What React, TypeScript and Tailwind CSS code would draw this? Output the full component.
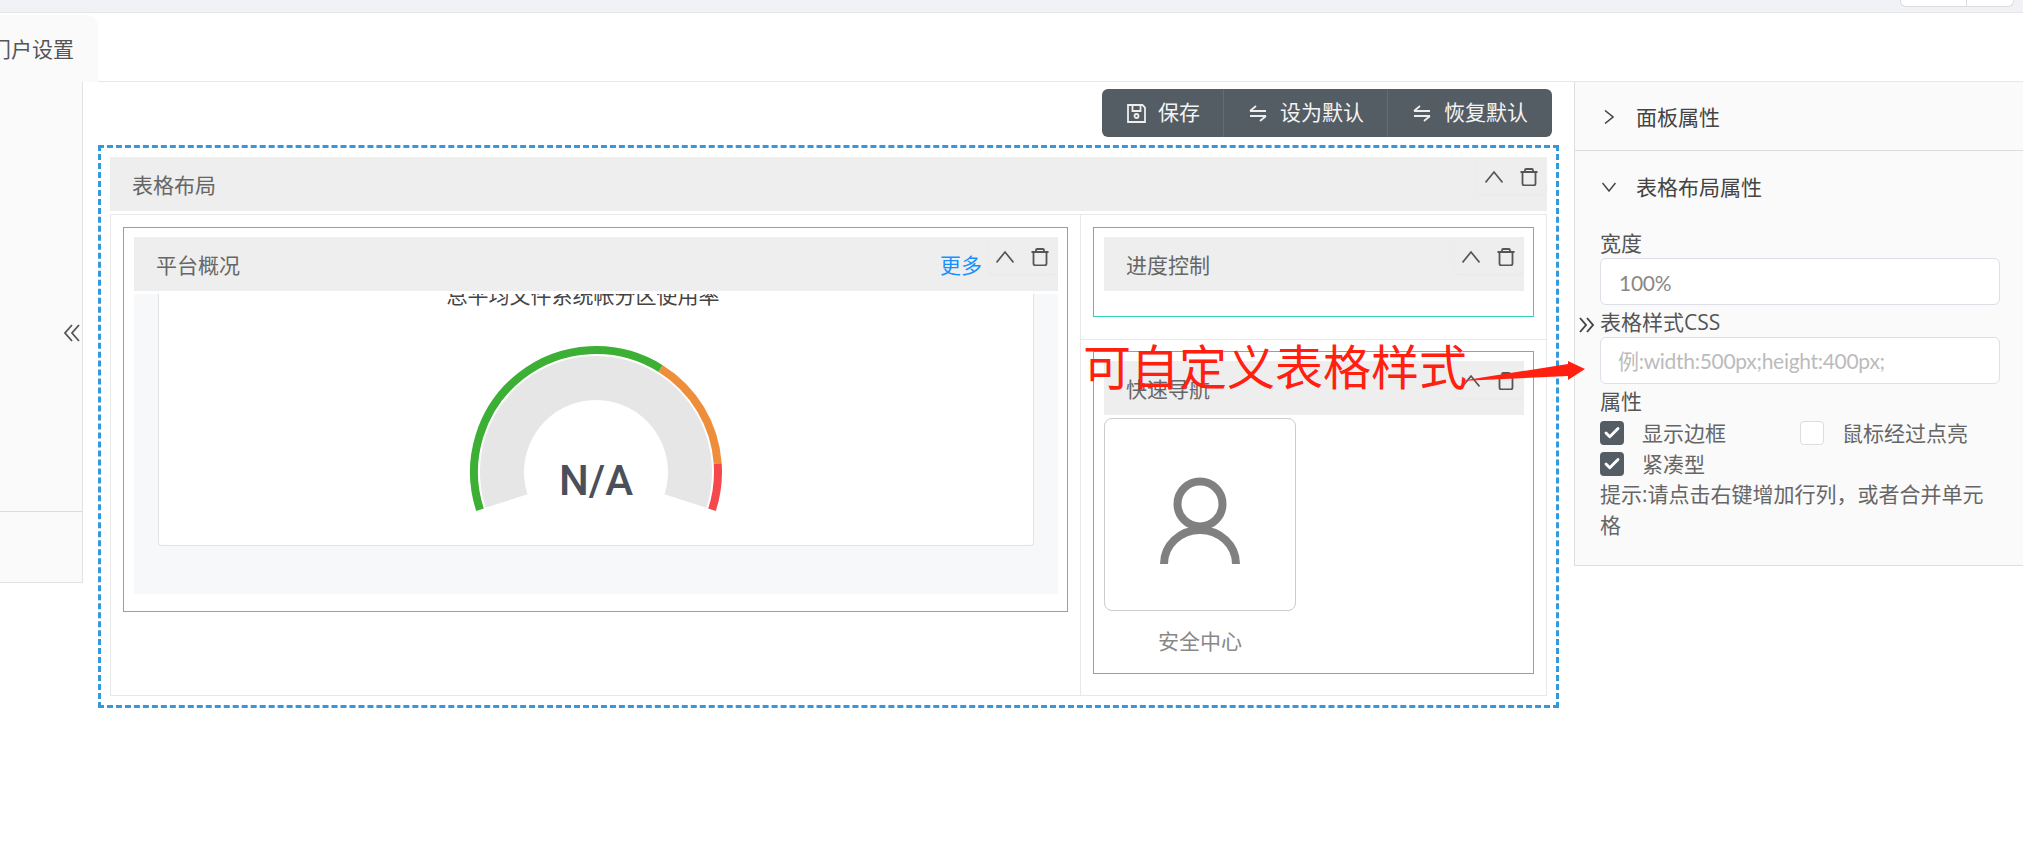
import { Check } from "lucide-react";

function pt(r: number, deg: number) {
  const a = (deg * Math.PI) / 180;
  return `${(130 + r * Math.cos(a)).toFixed(2)} ${(132 - r * Math.sin(a)).toFixed(2)}`;
}

function arc(r: number, from: number, to: number) {
  return `M${pt(r, from)} A${r} ${r} 0 0 1 ${pt(r, to)}`;
}

const Chevron = () => (
  <svg width="18" height="18" viewBox="0 0 18 18" fill="none" stroke="#555" strokeWidth="1.7">
    <path d="M0.5 14.5 9 4l8.5 10.5" />
  </svg>
);

const Trash = () => (
  <svg width="18" height="18" viewBox="0 0 18 18" fill="none" stroke="#555" strokeWidth="1.8">
    <path d="M0.5 4h17M5 4V2.200Q5 1 6.200 1h5.600Q13 1 13 2.200V4M2.500 4v11.500q0 2 2 2h9q2 0 2-2V4" />
  </svg>
);

const Swap = () => (
  <svg width="18" height="18" viewBox="0 0 18 18" fill="none" stroke="#eeeeee" strokeWidth="1.8">
    <path d="M1 7h16M1 7l6-5M1 12h16M17 12l-6 5" />
  </svg>
);

const Head = ({ title, more }: { title: string; more?: boolean }) => (
  <div className="flex h-[54px] items-start bg-[#eeeeee] pl-[22px] text-[21px] text-[#666666]">
    <span className="pt-[13px] leading-[30px]">{title}</span>
    {more && <span className="ml-auto pt-[13px] leading-[30px] text-[#1890ff]">更多</span>}
    <div className={(more ? "ml-[6px]" : "ml-auto") + " flex h-[37px] w-[70px] items-start gap-[17px] rounded-b-md pl-[8px] pt-[11px] shadow-[0_1px_2px_rgba(0,0,0,0.03)]"}>
      <Chevron />
      <Trash />
    </div>
  </div>
);

const Box = ({ children, className }: { children: React.ReactNode; className: string }) => (
  <div className={"border border-[#2ed1b2] pl-[10px] pr-[9px] pt-[9px] " + className}>{children}</div>
);

const CheckRow = ({ label, on }: { label: string; on: boolean }) => (
  <div className="flex h-[31px] w-[200px] items-center gap-[18px]">
    <span className={on ? "flex size-[24px] items-center justify-center rounded-[4px] bg-[#545c64]" : "size-[24px] rounded-[4px] border border-[#dddddd] bg-white"}>
      {on && <Check size={18} color="white" strokeWidth={3.8} />}
    </span>
    <span className="whitespace-nowrap text-[#666666]">{label}</span>
  </div>
);

export default function App() {
  return (
    <div className="relative flex h-[856px] w-[2023px] flex-col overflow-hidden bg-white font-['Open_Sans','Noto_Sans_CJK_SC',sans-serif]">
      <div className="flex h-[13px] justify-end border-b border-[#e6e6e6] bg-[#f0f2f5] pr-[9px]">
        <div className="flex h-[7px] w-[114px] rounded-b-md border border-t-0 border-[#dcdcdc] bg-white">
          <div className="w-[66px] border-r border-[#dcdcdc]" />
        </div>
      </div>

      <div className="flex h-[69px] items-end border-b border-[#e8e8e8]">
        <div className="-mb-px flex h-[67px] w-[98px] items-center justify-end overflow-hidden whitespace-nowrap rounded-tr-xl bg-[#fafafa] pr-[24px] pt-[2px] text-[21px] leading-none text-[#555555]">
          <span className="shrink-0">门户设置</span>
        </div>
      </div>

      <div className="flex flex-1 items-start">
        <div className="h-[501px] w-[83px] border-b border-r border-[#e2e2e2] bg-[#fafafa]">
          <div className="flex h-[430px] items-start justify-end border-b border-[#dddddd] pr-[2px] pt-[242px]">
            <svg width="16" height="18" viewBox="0 0 16 18" fill="none" stroke="#555" strokeWidth="1.8">
              <path d="M8 1 1 9l7 8M15 1 8 9l7 8" />
            </svg>
          </div>
        </div>

        <div className="w-[1491px]">
          <div className="flex justify-end pr-[22px] pt-[7px]">
            <div className="flex h-[48px] items-center rounded-md bg-[#545c64] text-[21px] text-[#f4f4f4]">
              <div className="flex h-full w-[122px] items-center gap-[12px] border-r border-[#636b73] pl-[25px]">
                <svg width="19" height="19" viewBox="0 0 19 19" fill="none" stroke="#eeeeee" strokeWidth="1.8">
                  <path d="M1 1h14.500L18 3.500V18H1zM5.500 1v6h8V1" />
                  <circle cx="9.500" cy="12" r="2" />
                </svg>
                <span>保存</span>
              </div>
              <div className="flex h-full w-[164px] items-center gap-[13px] border-r border-[#636b73] pl-[25px]">
                <Swap />
                <span>设为默认</span>
              </div>
              <div className="flex h-full w-[164px] items-center gap-[13px] pl-[25px]">
                <Swap />
                <span>恢复默认</span>
              </div>
            </div>
          </div>

          <div className="ml-[15px] mt-[8px] h-[563px] w-[1461px] border-[3px] border-dashed border-[#3498db] p-[9px]">
            <Head title="表格布局" />
            <div className="mt-[3px] flex h-[482px] border border-[#e8e8e8]">
              <div className="w-[969px] pl-[12px] pt-[12px]">
                <Box className="h-[385px] w-[945px]">
                  <Head title="平台概况" more />
                  <div className="mt-[3px] h-[300px] overflow-hidden bg-[#f7f8fa] pl-[24px]">
                    <div className="h-[252px] w-[876px] overflow-hidden rounded-b-sm border border-t-0 border-[#e0e2e5] bg-white">
                      <div className="-mt-[14px] pr-[26px] text-center text-[21px] leading-[30px] text-[#444444]">总平均文件系统帐分区使用率</div>
                      <div className="relative mx-auto mt-[30px] h-[180px] w-[260px]">
                        <svg width="260" height="180" viewBox="0 0 260 180" fill="none">
                          <path
                            d={`M${pt(116, 198)} A116 116 0 1 1 ${pt(116, -18)} L${pt(72, -18)} A72 72 0 1 0 ${pt(72, 198)} Z`}
                            fill="#e6e6e6"
                          />
                          <path d={arc(122, 198, 58)} stroke="#3cb034" strokeWidth="8" />
                          <path d={arc(122, 58, 4)} stroke="#ee8e3a" strokeWidth="8" />
                          <path d={arc(122, 4, -18)} stroke="#f5474c" strokeWidth="8" />
                        </svg>
                        <div className="absolute inset-x-0 top-[116px] text-center font-['Roboto',sans-serif] text-[42px] font-medium leading-[50px] text-[#4a505a]">N/A</div>
                      </div>
                    </div>
                  </div>
                </Box>
              </div>

              <div className="flex-1 border-l border-[#e8e8e8]">
                <div className="h-[125px] border-b border-[#e8e8e8] pl-[12px] pt-[12px]">
                  <Box className="h-[90px] w-[441px]">
                    <Head title="进度控制" />
                  </Box>
                </div>
                <div className="pl-[12px] pt-[11px]">
                  <Box className="h-[323px] w-[441px]">
                    <Head title="快速导航" />
                    <div className="mt-[3px] flex h-[193px] w-[192px] items-center justify-center rounded-lg border-[1.5px] border-[#cccccc]">
                      <svg width="84" height="100" viewBox="0 0 84 100" fill="none" stroke="#808080" strokeWidth="8">
                        <circle cx="42" cy="39" r="22.500" />
                        <path d="M6 99A36 34 0 0 1 78 99" />
                      </svg>
                    </div>
                    <div className="mt-[15px] w-[192px] text-center text-[21px] leading-[30px] text-[#888888]">安全中心</div>
                  </Box>
                </div>
              </div>
            </div>
          </div>
        </div>

        <div className="relative h-[484px] flex-1 border-b border-l border-[#dedede] bg-[#fafafa] text-[21px] leading-[30px]">
          <div className="flex h-[69px] items-center gap-[22px] border-b border-[#dddddd] pl-[29px] pt-[2px] text-[#444444]">
            <svg width="10" height="14" viewBox="0 0 10 14" fill="none" stroke="#444" strokeWidth="1.500">
              <path d="M1 0.500 9 7l-8 6.500" />
            </svg>
            <span>面板属性</span>
          </div>
          <div className="flex h-[77px] items-center gap-[20px] pb-[6px] pl-[27px] text-[#444444]">
            <svg width="14" height="10" viewBox="0 0 14 10" fill="none" stroke="#444" strokeWidth="1.500">
              <path d="M0.500 1 7 9l6.500-8" />
            </svg>
            <span>表格布局属性</span>
          </div>
          <div className="pl-[25px] text-[#555555]">
            <div>宽度</div>
            <div className="flex h-[47px] w-[400px] items-center rounded-md border border-[#dcdfe6] bg-white pl-[18px] pt-[2px] font-['Lato','Noto_Sans_CJK_SC',sans-serif] tracking-[-0.3px] text-[#888888]">100%</div>
            <div className="mt-[2px]">表格样式CSS</div>
            <div className="flex h-[47px] w-[400px] items-center rounded-md border border-[#dcdfe6] bg-white pl-[17px] font-['Lato','Noto_Sans_CJK_SC',sans-serif] tracking-[-0.3px] text-[#bbbbbb]">例:width:500px;height:400px;</div>
            <div className="mt-[2px]">属性</div>
            <div className="mt-px flex">
              <CheckRow label="显示边框" on />
              <CheckRow label="鼠标经过点亮" on={false} />
            </div>
            <CheckRow label="紧凑型" on />
            <div className="w-[390px] leading-[31px] text-[#666666]">提示:请点击右键增加行列，或者合并单元格</div>
          </div>
          <svg className="absolute left-[4px] top-[235px]" width="16" height="16" viewBox="0 0 16 16" fill="none" stroke="#444" strokeWidth="1.900">
            <path d="M1 1l6 7-6 7M8 1l6 7-6 7" />
          </svg>
        </div>
      </div>

      <div className="absolute left-[1083px] top-[337px] whitespace-nowrap text-[48px] leading-[60px] text-[#ff2010]">可自定义表格样式</div>
      <svg className="absolute left-[1450px] top-[355px]" width="140" height="32" viewBox="0 0 140 32" fill="#ff2010">
        <polygon points="10,26 118,9 118,6 135,14 118,25 118,21" />
      </svg>
    </div>
  );
}
